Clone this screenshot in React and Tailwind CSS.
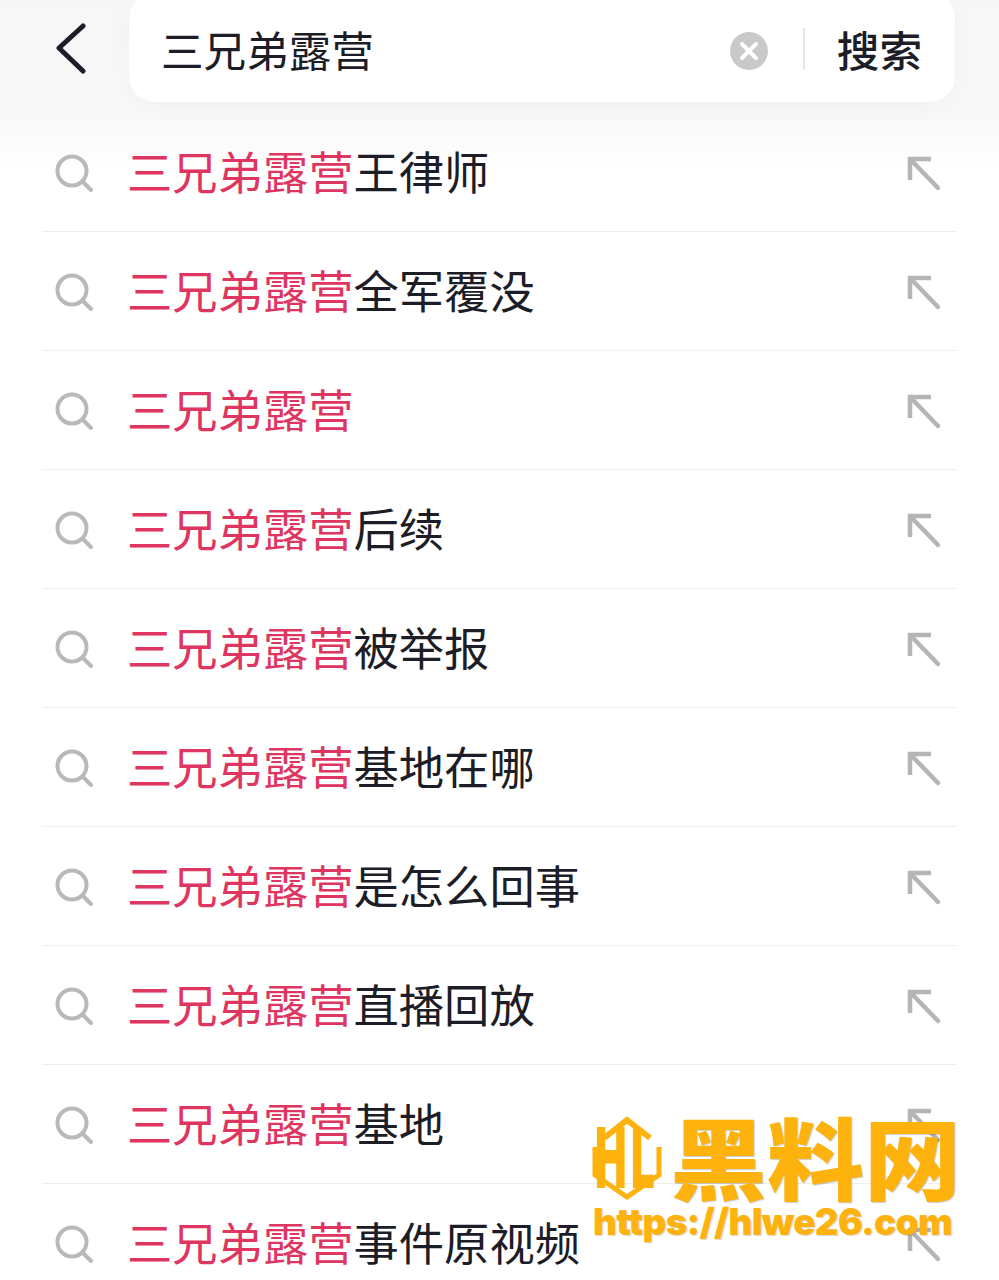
// search suggestions page
const cjk = 'font-["Noto_Sans_CJK_SC","Noto_Sans",sans-serif]';

const suggestions = [
  "王律师",
  "全军覆没",
  "",
  "后续",
  "被举报",
  "基地在哪",
  "是怎么回事",
  "直播回放",
  "基地",
  "事件原视频",
];

function BackIcon() {
  return (
    <svg width="40" height="60" viewBox="0 0 40 60" fill="none" className="shrink-0">
      <path d="M28 3 L4 25 L28 48" stroke="#1c1d26" strokeWidth="5" strokeLinecap="round" strokeLinejoin="round" />
    </svg>
  );
}

function SearchIcon() {
  return (
    <svg width="40" height="40" viewBox="0 0 40 40" fill="none" className="mt-[4px] shrink-0">
      <circle cx="17" cy="17" r="14.5" stroke="#b9b9b9" strokeWidth="4" />
      <path d="M28 28 L36 36" stroke="#b9b9b9" strokeWidth="4" strokeLinecap="round" />
    </svg>
  );
}

function ArrowIcon() {
  return (
    <svg width="40" height="40" viewBox="0 0 40 40" fill="none" className="mt-[4px] shrink-0">
      <path d="M7 26 L7 5 L28 5" stroke="#b5b5b5" strokeWidth="4.5" />
      <path d="M8 6 L35 34" stroke="#b5b5b5" strokeWidth="4.5" strokeLinecap="round" />
    </svg>
  );
}

function ClearIcon() {
  return (
    <svg width="38" height="38" viewBox="0 0 38 38" fill="none" className="mt-[4px] shrink-0">
      <circle cx="19" cy="19" r="19" fill="#c9c9c9" />
      <path d="M12 12 L26 26 M26 12 L12 26" stroke="#fff" strokeWidth="4" strokeLinecap="round" />
    </svg>
  );
}

function HlLogo() {
  return (
    <svg width="70" height="84" viewBox="0 0 70 84" className="shrink-0 overflow-visible">
      <path d="M12 21 L35 3 L58 21" fill="none" stroke="#fdb20d" strokeWidth="6" />
      <path d="M3 30 L3 58 L35 80 L67 58 L67 30" fill="none" stroke="#fdb20d" strokeWidth="5" />
      <text transform="translate(3 71) scale(0.5 1)" fontFamily="Inter" fontWeight="900" fontSize="84" fill="#fdb20d">H</text>
      <text transform="translate(39 71) scale(0.5 1)" fontFamily="Inter" fontWeight="900" fontSize="84" fill="#fdb20d">L</text>
    </svg>
  );
}

function Row({ tail }) {
  return (
    <div className="flex h-[119px] items-center border-b border-[#eeeeee] pl-[13px] pr-[13px]">
      <SearchIcon />
      <div className="ml-[32px] flex-1 whitespace-nowrap pb-[2px] text-[45.3px] leading-none">
        <span className="text-[#de3660]">三兄弟露营</span>
        <span className="text-[#1c1d26]">{tail}</span>
      </div>
      <ArrowIcon />
    </div>
  );
}

export default function App() {
  return (
    <div className={`relative h-[1280px] w-[999px] overflow-hidden bg-[linear-gradient(#f7f7f7_0px,#f8f8f8_115px,#ffffff_175px)] ${cjk}`}>
      <header className="flex h-[113px] items-start">
        <div className="flex w-[129px] justify-end pr-[34px] pt-[23px]">
          <BackIcon />
        </div>
        <div className="-mt-[8px] flex h-[110px] w-[826px] items-center rounded-[26px] bg-white pl-[32px] pr-[33px] pt-[4px] shadow-[0_4px_24px_rgba(0,0,0,0.03)]">
          <span className="flex-1 text-[42.6px] leading-none text-[#1c1d26]">三兄弟露营</span>
          <ClearIcon />
          <div className="ml-[35px] mr-[32px] h-[42px] w-[2px] bg-[#e6e6e6]" />
          <span className="text-[42.6px] font-medium leading-none text-[#1c1d26]">搜索</span>
        </div>
      </header>

      <main className="ml-[42px] w-[914px]">
        {suggestions.map((tail, i) => (
          <Row key={i} tail={tail} />
        ))}
      </main>

      {/* site watermark over the bottom right rows */}
      <div className="absolute left-[592px] top-[1117px] w-[365px]">
        <div className="flex h-[88px] items-start">
          <HlLogo />
          <span className="ml-[8px] -mt-[7px] origin-top scale-y-[0.91] whitespace-nowrap text-[97px] font-black leading-[97px] text-[#fdb20d] [text-shadow:1px_1px_1px_rgba(0,0,0,0.2)]">黑料网</span>
        </div>
        <div className="-mt-[2px] ml-[1px] whitespace-nowrap font-['Inter',sans-serif] text-[37px] font-black leading-[38px] tracking-[-0.8px] text-[#fdb20d] [text-shadow:1px_1px_1px_rgba(0,0,0,0.15)]">
          https://hlwe26.com
        </div>
      </div>
    </div>
  );
}
